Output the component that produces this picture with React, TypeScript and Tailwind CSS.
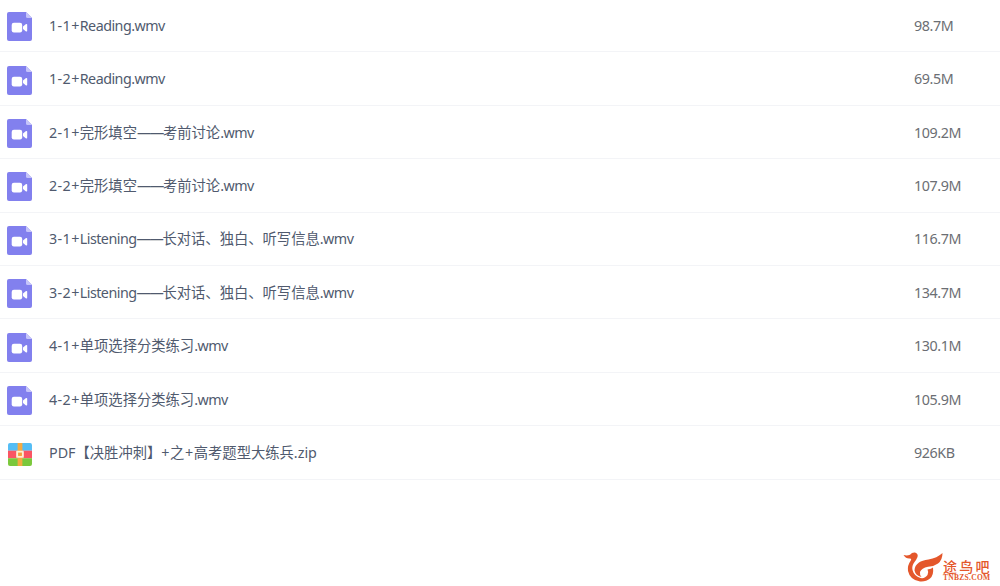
type FileItem = { name: string; size: string; kind: 'video' | 'zip' };

const files: FileItem[] = [
  { name: '1-1+Reading.wmv', size: '98.7M', kind: 'video' },
  { name: '1-2+Reading.wmv', size: '69.5M', kind: 'video' },
  { name: '2-1+完形填空——考前讨论.wmv', size: '109.2M', kind: 'video' },
  { name: '2-2+完形填空——考前讨论.wmv', size: '107.9M', kind: 'video' },
  { name: '3-1+Listening——长对话、独白、听写信息.wmv', size: '116.7M', kind: 'video' },
  { name: '3-2+Listening——长对话、独白、听写信息.wmv', size: '134.7M', kind: 'video' },
  { name: '4-1+单项选择分类练习.wmv', size: '130.1M', kind: 'video' },
  { name: '4-2+单项选择分类练习.wmv', size: '105.9M', kind: 'video' },
  { name: 'PDF【决胜冲刺】+之+高考题型大练兵.zip', size: '926KB', kind: 'zip' },
];

function VideoIcon() {
  return (
    <svg className="h-[29px] w-[25px]" viewBox="0 0 25 29">
      <path d="M2 0H19L25 6V27a2 2 0 0 1-2 2H2a2 2 0 0 1-2-2V2a2 2 0 0 1 2-2Z" fill="#8280ee" />
      <path d="M19 0L25 6H20.500a1.500 1.500 0 0 1-1.500-1.500Z" fill="#c5c4fa" />
      <rect x="4.700" y="10.700" width="10.500" height="9.800" rx="2.200" fill="#fff" />
      <path d="M16 14.600L18.700 12.200q1.500-.8 1.500.6v5.800q0 1.400-1.500.6L16 17Z" fill="#fff" />
    </svg>
  );
}

function ZipIcon() {
  return (
    <svg className="ml-px mt-px h-[23px] w-[24px]" viewBox="0 0 25 24">
      <path d="M2 0H23a2 2 0 0 1 2 2V8H0V2a2 2 0 0 1 2-2Z" fill="#54bdf5" />
      <path d="M0 8H25V16H0Z" fill="#fa5563" />
      <path d="M0 16H25V22a2 2 0 0 1-2 2H2a2 2 0 0 1-2-2Z" fill="#7bc83c" />
      <path d="M10 0H15V24H10Z" fill="#f5aa42" />
      <rect x="8.500" y="8" width="8" height="7.500" rx="1" fill="#fff0d0" />
      <rect x="10.500" y="10" width="4" height="3.500" fill="#f5a03c" />
    </svg>
  );
}

const runPattern = /(^\d-\d\+|——|Reading|Listening|\.wmv|\+之\+)/;

function runClass(run: string) {
  if (run === '——') return 'tracking-[-1.300px]';
  if (run === '+之+') return 'tracking-[0.600px]';
  if (/^\d-\d\+$/.test(run)) return 'tracking-[0.400px]';
  if (/^(Reading|Listening|\.wmv)$/.test(run)) return 'tracking-[-0.520px]';
  return '';
}

function FileName({ name }: { name: string }) {
  return (
    <span className="whitespace-nowrap">
      {name
        .split(runPattern)
        .filter(Boolean)
        .map((run, i) => (
          <span key={i} className={runClass(run)}>
            {run}
          </span>
        ))}
    </span>
  );
}

function BirdLogo() {
  return (
    <svg className="h-[31px] w-[40px]" viewBox="0 0 40 31" fill="#e4572b">
      <path d="M0.500 4Q4 5 7 3.800Q9 1.200 12 1.500Q15.500 2.500 14.500 6Q13.500 8.500 11.500 11Q8.500 15 9.500 19Q11 25 17.500 27Q22 27.800 24.500 24Q26 21 24.500 18.500Q28.500 18 30 16.500Q31 24 27 27.500Q23 31 17 30.500Q7 29 5 20Q4.200 14.500 7.500 10Q9 7.800 7 7.500Q3 8 0.500 4Z" />
      <path d="M39.500 2Q39.500 9 35 12.500Q31 15.500 25 15.800Q18.500 17 17 21Q16.500 24 18.500 26Q12.500 24.500 11.500 19.500Q11.500 14.500 16 11.500Q19 9.500 25.500 8.500Q34 7 39.500 2Z" />
    </svg>
  );
}

export default function App() {
  return (
    <main className="flex h-[586px] w-full flex-col justify-between overflow-hidden bg-white font-['Noto_Sans','Noto_Sans_CJK_SC',sans-serif] text-[14.300px] leading-5">
      <ul className="-mt-[1.100px]">
        {files.map((file) => (
          <li key={file.name} className="flex h-[53.430px] items-center border-b border-[#f3f4f7] pl-[7px]">
            <div className="flex w-[42px] shrink-0 items-center pt-[3px]">
              {file.kind === 'video' ? <VideoIcon /> : <ZipIcon />}
            </div>
            <div className="flex-1 pt-[1.300px] text-[#505a6e]">
              <FileName name={file.name} />
            </div>
            <div className="w-[86px] pt-[1.300px] tracking-[-0.400px] text-[#6b6e73]">{file.size}</div>
          </li>
        ))}
      </ul>
      <footer className="flex justify-end pr-[9px] pb-[4px] text-[#e4572b]">
        <BirdLogo />
        <div className="flex w-[48px] flex-col pt-[8px]">
          <span className="whitespace-nowrap font-['Noto_Sans_CJK_SC',sans-serif] text-[14px] font-medium leading-[14px] tracking-[2.200px]">途鸟吧</span>
          <span className="whitespace-nowrap pt-px font-['Liberation_Serif',serif] text-[7.500px] font-bold leading-[8px] tracking-[0.300px]">TNBZS.COM</span>
        </div>
      </footer>
    </main>
  );
}
